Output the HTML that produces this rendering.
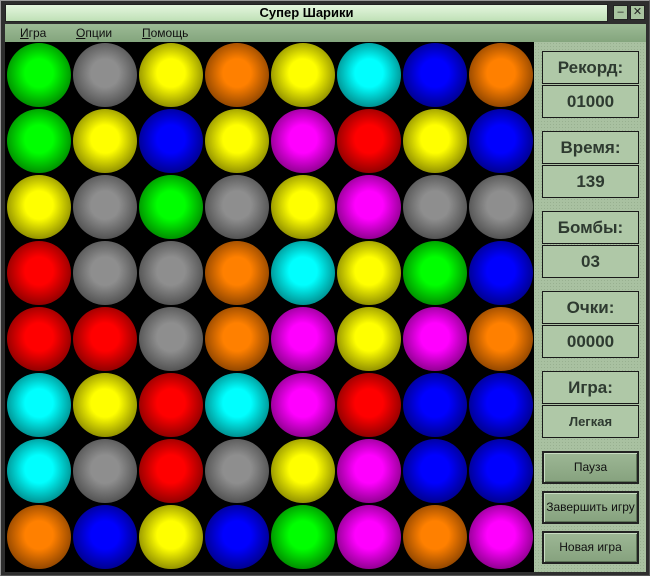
<!DOCTYPE html>
<html><head><meta charset="utf-8"><style>
*{margin:0;padding:0;box-sizing:border-box}
body{width:650px;height:576px;background:#2e2e2e;position:relative;overflow:hidden;font-family:"Liberation Sans",sans-serif}
.frame{position:absolute;left:0;top:0;width:650px;height:576px;border:1px solid #9a9a9a;border-right-color:#555;border-bottom-color:#555}
.title{position:absolute;left:5px;top:4px;width:603px;height:18px;background:linear-gradient(#e4f6de,#bfe0b6);border:1px solid #222;font-weight:bold;font-size:13px;text-align:center;line-height:16px;color:#000}
.tb{position:absolute;top:5px;width:15px;height:15px;background:#a9c4a0;border:1px solid #222;font-size:11px;line-height:12px;text-align:center;color:#222}
.menu{position:absolute;left:5px;top:24px;width:641px;height:18px;background:linear-gradient(#9cba95,#84a57d);font-size:12px;line-height:18px}
.menu span{position:absolute;top:0;color:#111}
.board{position:absolute;left:5px;top:42px;width:529px;height:530px;background:#000}
.ball{position:absolute;width:64px;height:64px;border-radius:50%}
.panel{position:absolute;left:534px;top:42px;width:112px;height:530px;background-color:#a9c1a1;background-image:radial-gradient(#98b090 0.6px,transparent 0.7px);background-size:3px 3px}
.box{position:absolute;left:8px;width:97px;height:33px;border:1px solid #1a1a1a;background:#afc8a7;text-align:center;font-weight:bold;color:#2e3a30;font-size:17px;line-height:31px}
.btn{position:absolute;left:8px;width:97px;height:33px;border:2px solid #222;background:linear-gradient(#9db795,#86a27e);box-shadow:inset 1px 1px 0 #c8dcc2,inset -1px -1px 0 #5d7457;text-align:center;font-size:12px;line-height:29px;color:#111}
</style></head><body>
<div class="frame"></div>
<div class="title">Супер Шарики</div>
<div class="tb" style="left:613px">–</div>
<div class="tb" style="left:630px">✕</div>
<div class="menu"><span style="left:15px"><u>И</u>гра</span><span style="left:71px"><u>О</u>пции</span><span style="left:137px"><u>П</u>омощь</span></div>
<div class="board" id="b"></div>
<div class="panel">
<div class="box" style="top:9px">Рекорд:</div>
<div class="box" style="top:43px">01000</div>
<div class="box" style="top:89px">Время:</div>
<div class="box" style="top:123px">139</div>
<div class="box" style="top:169px">Бомбы:</div>
<div class="box" style="top:203px">03</div>
<div class="box" style="top:249px">Очки:</div>
<div class="box" style="top:283px">00000</div>
<div class="box" style="top:329px">Игра:</div>
<div class="box" style="top:363px;font-size:13px">Легкая</div>
<div class="btn" style="top:409px">Пауза</div>
<div class="btn" style="top:449px">Завершить игру</div>
<div class="btn" style="top:489px">Новая игра</div>
</div>
<script>
var C={G:["#00ff00","#004a00"],A:["#8e8e8e","#2e2e2e"],Y:["#ffff00","#4e4e00"],O:["#ff8000","#502400"],C:["#00ffff","#004e4e"],B:["#0000ff","#00004a"],M:["#ff00ff","#4e004e"],R:["#ff0000","#4e0000"]};
var rows=["GAYOYCBO","GYBYMRYB","YAGAYMAA","RAAOCYGB","RRAOMYMO","CYRCMRBB","CARAYMBB","OBYBGMOM"];
var h="";
for(var r=0;r<8;r++)for(var c=0;c<8;c++){var k=C[rows[r][c]];
h+='<div class="ball" style="left:'+(2+66*c)+'px;top:'+(1+66*r)+'px;background:radial-gradient(circle at 50% 47%,'+k[0]+' 0%,'+k[0]+' 30%,'+k[1]+' 100%)"></div>';}
document.getElementById("b").innerHTML=h;
</script>
</body></html>
